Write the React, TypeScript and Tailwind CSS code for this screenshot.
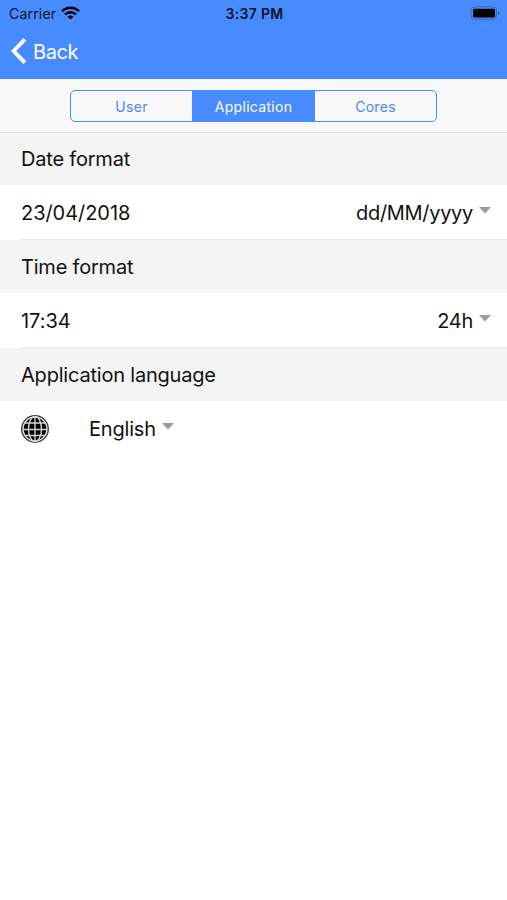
import React from 'react';

const tabs = ['User', 'Application', 'Cores'];

const Caret: React.FC = () => (
    <svg className="h-[7px] w-3 shrink-0" viewBox="0 0 12 7" fill="#9b9b9b">
        <path d="M0 0h12L6 6.5z" />
    </svg>
);

const Globe: React.FC = () => (
    <svg className="h-7 w-7 shrink-0" viewBox="0 0 28 28" fill="none">
        <circle cx="14" cy="14" r="13.3" fill="#e8e8e8" stroke="#333" strokeWidth="1.3" />
        <circle cx="14" cy="14" r="11.3" fill="#000" />
        <g stroke="#d4d4d4" strokeWidth="1.4">
            <path d="M14 2v24M2 14.5h24M4 8h20M4 20.5h20" />
            <ellipse cx="14" cy="14" rx="6.5" ry="12.5" />
        </g>
    </svg>
);

interface SectionTitleProps {
    title: string;
}

const SectionTitle: React.FC<SectionTitleProps> = ({ title }) => (
    <h2 className="flex h-[53px] items-center bg-[#f4f4f4] pl-[21px] pt-px">{title}</h2>
);

interface SettingRowProps {
    value: string;
    format: string;
}

const SettingRow: React.FC<SettingRowProps> = ({ value, format }) => (
    <div className="h-[55px] pl-5">
        <div className="flex h-full items-center justify-between border-b border-[#e9e9e9] pl-px pr-4 pt-px">
            <span className="tracking-[-0.05px]">{value}</span>
            <button className="flex items-center gap-1.5">
                <span className="tracking-[-0.3px]">{format}</span>
                <span className="pb-1"><Caret /></span>
            </button>
        </div>
    </div>
);

const App: React.FC = () => {
    return (
        <div className="min-h-screen w-full bg-white font-['Inter',sans-serif] text-[20px] leading-6 tracking-[-0.2px] text-[#111]">
            <header className="h-[79px] bg-[#488aff]">
                {/* Status bar */}
                <div className="grid h-[27px] grid-cols-3 items-center pl-[9px] pr-[7px] text-[14px] leading-4 text-[#0a1222]">
                    <div className="flex items-center gap-[5px]">
                        <span className="tracking-[0.2px]">Carrier</span>
                        <svg className="h-[14px] w-[19px] -translate-y-px" viewBox="0 0 19 14" fill="none" stroke="#000" strokeWidth="2.4">
                            <path d="M1 5.2a12.2 12.2 0 0 1 17 0M4 8.5a7.8 7.8 0 0 1 11 0" />
                            <path d="M9.5 13.5L6.5 10.7a4.2 4.2 0 0 1 6 0z" fill="#000" stroke="none" />
                        </svg>
                    </div>
                    <span className="text-center font-semibold tracking-[0.3px]">3:37 PM</span>
                    <svg className="h-[14px] w-[30px] -translate-y-px justify-self-end" viewBox="0 0 30 14" fill="none">
                        <rect x="1" y="0.8" width="25.5" height="12.4" rx="3.5" stroke="#3564b4" />
                        <rect x="3" y="2.7" width="22" height="8.8" rx="1.5" fill="#000" />
                        <path d="M28 5v4c1.6-.6 1.6-3.4 0-4z" fill="#2c5499" />
                    </svg>
                </div>
                <button className="flex h-[50px] items-center gap-[7px] pl-[11px] tracking-[-0.45px] text-white">
                    <svg className="h-[26px] w-[15px] -translate-y-px" viewBox="0 0 15 26" fill="none" stroke="#fff" strokeWidth="3.8">
                        <path d="M13.8 1.4L2.6 13l11.2 11.6" />
                    </svg>
                    <span>Back</span>
                </button>
            </header>

            {/* Segmented control */}
            <nav className="flex h-[54px] items-center justify-center border-b border-[#dedede] bg-[#f8f8f8]">
                <div className="grid h-8 w-[367px] grid-cols-[121px_123px_121px] overflow-hidden rounded-[5px] border border-[#488aff] text-[14px] tracking-[0.3px]">
                    {tabs.map((tab) => (
                        <button
                            key={tab}
                            className={tab === 'Application' ? 'bg-[#488aff] pt-0.5 text-white' : 'pt-0.5 text-[#488aff]'}
                        >
                            {tab}
                        </button>
                    ))}
                </div>
            </nav>

            <main>
                <h2 className="flex h-[52px] items-center bg-[#f4f4f4] pl-[21px]">Date format</h2>
                <SettingRow value="23/04/2018" format="dd/MM/yyyy" />
                <SectionTitle title="Time format" />
                <SettingRow value="17:34" format="24h" />
                <SectionTitle title="Application language" />
                <div className="flex h-[55px] items-center pl-[21px]">
                    <Globe />
                    <button className="ml-10 flex items-center gap-1.5">
                        <span>English</span>
                        <span className="pb-1"><Caret /></span>
                    </button>
                </div>
            </main>
        </div>
    );
};

export default App;
